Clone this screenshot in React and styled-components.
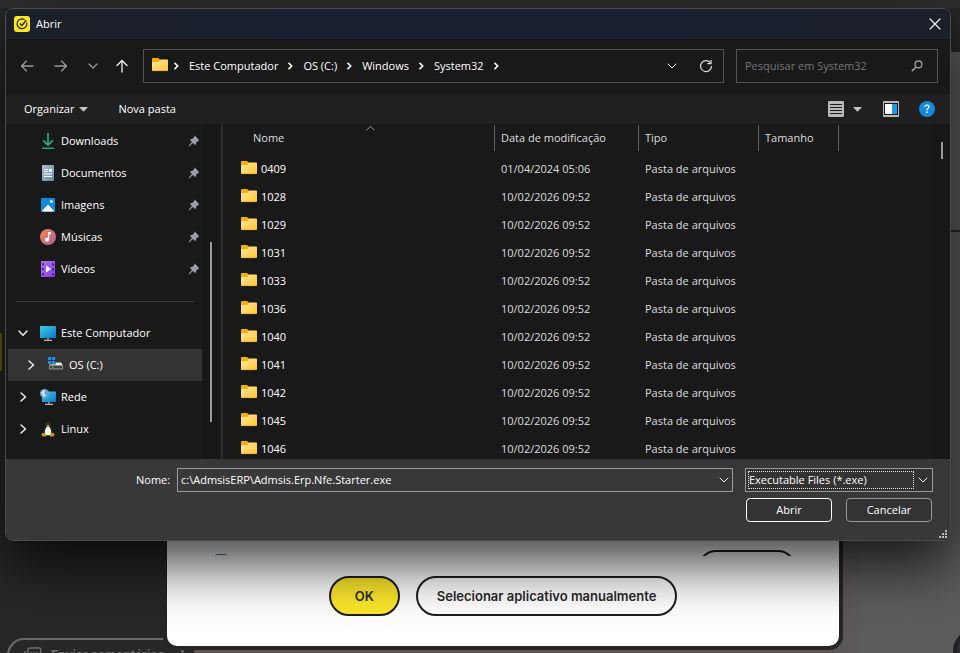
import React from "react";
import styled, { createGlobalStyle } from "styled-components";

const GlobalStyle = createGlobalStyle`
  *, *::before, *::after { box-sizing: border-box; }
  html, body { margin: 0; height: 100%; overflow: hidden; background: #262626; }
  body { font-family: "Open Sans", "Noto Sans", sans-serif; font-size: 11px; line-height: 16px; color: #fff; }
  button, input, select { font: inherit; color: inherit; margin: 0; }
`;

/* ---------- page behind the dialogs ---------- */

const Stage = styled.div`
  position: relative;
  min-height: 100vh;
  overflow: hidden;
  display: grid;
`;

const AppPage = styled.div`
  display: grid;
  grid-template-columns: 194px 1fr;
  grid-template-rows: 52px 1fr;
`;

const AppBar = styled.header`
  grid-column: 1 / -1;
  background: linear-gradient(#2e2e2e 8px, #262626 8px);
`;

const AppSide = styled.aside`
  display: flex;
  flex-direction: column;
  justify-content: space-between;
  background: #272727;
`;

const ActiveMark = styled.div`
  width: 2px;
  height: 38px;
  margin-top: 281px;
  border-radius: 0 2px 2px 0;
  background: #6b6214;
`;

const FeedbackButton = styled.button`
  display: flex;
  align-items: center;
  gap: 9px;
  height: 34px;
  margin: 0 10px -19px 7px;
  padding: 0 0 0 15px;
  border: 2px solid #6a6a6a;
  border-radius: 17px;
  background: none;
  color: #6e6e6e;
  font-family: Inter, sans-serif;
  font-size: 12px;
  font-weight: 700;
  white-space: nowrap;
`;

const AppMain = styled.main`
  display: flex;
  flex-direction: column;
  align-items: flex-end;
  justify-content: space-between;
  background: linear-gradient(90deg, #5c5553 640px, #5c5c5c 670px);
`;

const MainRule = styled.hr`
  width: 100%;
  margin: 178px 0 0;
  border: 0;
  border-top: 2px solid #262626;
`;

const MainText = styled.p`
  margin: 84px 55px 0 0;
  color: #262626;
  font-family: Inter, sans-serif;
  font-size: 13px;
`;

const ChatBubble = styled.button`
  width: 44px;
  height: 44px;
  margin: 0 -37px -20px 0;
  border: 4px solid #202020;
  border-radius: 50%;
  background: #2a2d31;
`;

/* ---------- application prompt ---------- */

const Prompt = styled.section`
  position: absolute;
  left: 163px;
  right: 117px;
  bottom: 3px;
  display: flex;
  flex-direction: column;
  padding-top: 120px;
  border: 4px solid #262626;
  border-radius: 14px;
  background: #fff;
`;

const PromptScroll = styled.div`
  display: flex;
  align-items: flex-start;
  justify-content: space-between;
  height: 6px;
  overflow: hidden;
  padding: 0 43px 0 48px;
`;

const PromptIcon = styled.div`
  width: 12px;
  height: 12px;
  margin-top: 4px;
  border-top: 1px solid #1d6fa5;
  border-radius: 3px;
`;

const PromptPill = styled.div`
  width: 98px;
  height: 36px;
  border: 2px solid #202020;
  border-radius: 18px;
`;

const PromptActions = styled.div`
  display: flex;
  justify-content: center;
  gap: 16px;
  padding: 20px 0 30px;
`;

const PillButton = styled.button`
  height: 40px;
  padding: 0 ${(p) => (p.$primary ? 24 : 19)}px;
  border: 2px solid #1d1d1d;
  border-radius: 20px;
  background: ${(p) => (p.$primary ? "#fde92b" : "#fff")};
  color: #2a2a2a;
  font-family: Inter, sans-serif;
  font-size: 13px;
  font-weight: 600;
  white-space: nowrap;
`;

/* ---------- file dialog ---------- */

const Dialog = styled.section`
  position: absolute;
  top: 8px;
  left: 5px;
  right: 9px;
  display: flex;
  flex-direction: column;
  overflow: hidden;
  border: 1px solid #4a4a4a;
  border-radius: 8px;
  background: #191919;
  box-shadow: 0 23px 56px rgba(0, 0, 0, 0.76);
`;

const TitleBar = styled.header`
  display: flex;
  align-items: center;
  gap: 6px;
  height: 30px;
  padding: 0 7px 0 8px;
  background: linear-gradient(90deg, #1c2027, #1a2030 30%, #1a2030 70%, #1c2029);
`;

const DialogTitle = styled.h1`
  flex: 1;
  margin: 0;
  font-size: 11px;
  font-weight: 400;
  line-height: 16px;
`;

const IconButton = styled.button`
  display: flex;
  align-items: center;
  justify-content: center;
  flex: none;
  width: ${(p) => p.$w || 16}px;
  height: 16px;
  padding: 0;
  border: 0;
  background: none;
  color: ${(p) => (p.$dim ? "#9a9a9a" : "#f2f2f2")};
`;

const NavBar = styled.nav`
  display: flex;
  align-items: center;
  gap: 12px;
  height: 55px;
  padding: 0 12px 1px;
`;

const NavButtons = styled.div`
  display: flex;
  gap: 16px;
  width: 113px;
`;

const AddressBar = styled.div`
  display: flex;
  align-items: center;
  flex: 1;
  height: 34px;
  padding: 0 9px 0 8px;
  border: 1px solid #535353;
`;

const Crumbs = styled.ol`
  display: flex;
  align-items: center;
  flex: 1;
  margin: 0;
  padding: 0 0 0 6px;
  list-style: none;
`;

const Crumb = styled.li`
  display: flex;
  align-items: center;
`;

const CrumbLink = styled.a`
  margin: 0 10px;
  color: #fff;
  text-decoration: none;
  white-space: nowrap;
`;

const AddressTools = styled.div`
  display: flex;
  gap: 18px;
`;

const SearchBox = styled.label`
  display: flex;
  align-items: center;
  width: 202px;
  height: 34px;
  padding: 0 14px 0 8px;
  border: 1px solid #535353;
`;

const SearchInput = styled.input`
  flex: 1;
  min-width: 0;
  padding: 0;
  border: 0;
  outline: 0;
  background: none;
  &::placeholder { color: #777; opacity: 1; }
`;

const ToolBar = styled.div`
  display: flex;
  align-items: center;
  justify-content: space-between;
  height: 30px;
  padding: 0 15px 0 18px;
  background: #202020;
`;

const ToolGroup = styled.div`
  display: flex;
  align-items: center;
  gap: ${(p) => p.$gap}px;
`;

const ToolButton = styled.button`
  display: flex;
  align-items: center;
  gap: 5px;
  padding: 0;
  border: 0;
  background: none;
  white-space: nowrap;
`;

const Browser = styled.div`
  display: flex;
  height: 335px;
  overflow: hidden;
`;

const SidePane = styled.div`
  display: flex;
  width: 217px;
  flex: none;
  padding-left: 2px;
  border-right: 2px solid #2b2b2b;
`;

const Tree = styled.ul`
  width: 194px;
  margin: 0;
  padding: 1px 0 0;
  list-style: none;
`;

const TreeGap = styled.li`
  display: flex;
  align-items: center;
  height: 32px;
  padding: 0 8px;
  &::after { content: ""; flex: 1; border-top: 1px solid #3c3c3c; }
`;

const TreeItem = styled.li`
  display: flex;
  align-items: center;
  height: 32px;
  padding: 0 2px 0 ${(p) => (p.$nested ? 16 : 8)}px;
  background: ${(p) => (p.$selected ? "#333" : "none")};
`;

const TreeToggle = styled.span`
  display: flex;
  width: 24px;
  color: #e8e8e8;
`;

const TreeLabel = styled.span`
  flex: 1;
  padding-left: 5px;
  white-space: nowrap;
`;

const ScrollTrack = styled.div`
  flex: none;
  width: 17px;
  background: #171717;
`;

const ScrollThumb = styled.div`
  width: 2px;
  height: ${(p) => p.$size}px;
  margin: ${(p) => p.$offset}px 0 0 8px;
  background: #9a9a9a;
`;

const FilePane = styled.div`
  position: relative;
  flex: 1;
  overflow: hidden;
`;

const SortMark = styled.span`
  position: absolute;
  top: 1px;
  left: 143px;
  display: flex;
  color: #9c9c9c;
`;

const FileTable = styled.table`
  width: 100%;
  table-layout: fixed;
  border-collapse: collapse;
`;

const Col = styled.col`
  width: ${(p) => (p.$w ? `${p.$w}px` : "auto")};
`;

const HeadCell = styled.th`
  height: 31px;
  padding: 1px 0 4px;
  font-weight: 400;
  text-align: left;
  color: #dedede;
`;

const HeadLabel = styled.div`
  height: 26px;
  padding: 5px 0 0 ${(p) => p.$pad}px;
  border-right: 1px solid #5f5f5f;
`;

const Cell = styled.td`
  height: 28px;
  padding: 0 0 0 6px;
  color: #dedede;
  white-space: nowrap;
`;

const NameCell = styled(Cell)`
  padding-left: 18px;
  color: #fff;
`;

const FileName = styled.div`
  display: flex;
  align-items: center;
  gap: 4px;
`;

const Footer = styled.form`
  display: flex;
  flex-direction: column;
  gap: 6px;
  padding: 9px 17px 18px 130px;
  background: #383838;
`;

const FieldRow = styled.div`
  display: flex;
  align-items: center;
`;

const FieldLabel = styled.label`
  width: 41px;
  flex: none;
`;

const ComboBox = styled.div`
  display: flex;
  align-items: center;
  flex: 1;
  height: 24px;
  margin-right: 12px;
  padding: 0 0 0 3px;
  border: 1px solid #9b9b9b;
`;

const ComboInput = styled.input`
  flex: 1;
  min-width: 0;
  padding: 0;
  border: 0;
  outline: 0;
  background: none;
`;

const TypeBox = styled.div`
  display: flex;
  align-items: center;
  width: 188px;
  height: 24px;
  padding: 2px 0 2px 2px;
  border: 1px solid #9b9b9b;
  background: #333;
`;

const TypeSelect = styled.select`
  flex: 1;
  min-width: 0;
  height: 18px;
  padding: 0;
  appearance: none;
  border: 1px dotted #e6e6e6;
  border-radius: 0;
  outline: 0;
  background: none;
  line-height: 16px;
`;

const ActionRow = styled.div`
  display: flex;
  justify-content: flex-end;
  gap: 14px;
  padding-right: 1px;
`;

const ActionButton = styled.button`
  width: 86px;
  height: 24px;
  padding: 0;
  border: 1px solid ${(p) => (p.$default ? "#fff" : "#9b9b9b")};
  border-radius: 4px;
  background: #333;
`;

const Grip = styled.span`
  position: absolute;
  right: 3px;
  bottom: 2px;
  display: flex;
`;

/* ---------- icons ---------- */

const Line = ({ w, h, d, sw = 1 }) => (
  <svg width={w} height={h} viewBox={`0 0 ${w} ${h}`} fill="none" stroke="currentColor" strokeWidth={sw} strokeLinecap="round" strokeLinejoin="round">
    <path d={d} />
  </svg>
);

const NortonIcon = () => (
  <svg width="16" height="16" viewBox="0 0 16 16">
    <rect width="16" height="16" rx="3" fill="#fde72b" />
    <path d="M10.6 3.7A4.9 4.9 0 1 0 12.7 6.6" fill="none" stroke="#23231c" strokeWidth="1.2" />
    <path d="M5.8 7.4 7.9 9.4 12.3 4.3" fill="none" stroke="#23231c" strokeWidth="1.4" />
  </svg>
);

const FolderIcon = () => (
  <svg width="16" height="16" viewBox="0 0 16 16">
    <defs>
      <linearGradient id="folder" x1="0" y1="0" x2="1" y2="1">
        <stop offset="0" stopColor="#ffe8a0" />
        <stop offset="1" stopColor="#fdc634" />
      </linearGradient>
    </defs>
    <path d="M0 1Q0 0 1 0H6L8 1.5V5H0Z" fill="#f5ad0c" />
    <path d="M0 4.8Q0 4 .8 4H6.4L8.4 1.5H15.2Q16 1.5 16 2.3V12Q16 13 15.2 13H.8Q0 13 0 12Z" fill="url(#folder)" />
    <path d="M.5 12.7H15.5" stroke="#e2a41c" strokeWidth=".6" />
  </svg>
);

const DownloadIcon = () => (
  <svg width="16" height="16" viewBox="0 0 16 16" fill="none" stroke="#25b58f" strokeWidth="1.6">
    <path d="M8 0V12M3.2 7.4 8 12.2 12.8 7.4" />
    <path d="M2 15.2H14" stroke="#1ea588" />
  </svg>
);

const DocumentIcon = () => (
  <svg width="16" height="16" viewBox="0 0 16 16">
    <defs>
      <linearGradient id="doc" x1="0" y1="0" x2="1" y2="1">
        <stop offset="0" stopColor="#a9c0d6" />
        <stop offset="1" stopColor="#6685a8" />
      </linearGradient>
    </defs>
    <rect x="2" width="12" height="16" rx="1" fill="url(#doc)" />
    <path d="M4 4.5H8M4 6.5H8M4 9H12M4 11.5H12" stroke="#fff" strokeWidth="1.1" />
    <rect x="9" y="4" width="3" height="3" fill="#fff" />
  </svg>
);

const ImageIcon = () => (
  <svg width="16" height="16" viewBox="0 0 16 16">
    <rect x="1" y="1" width="14" height="14" rx="1" fill="#1489d8" />
    <path d="M2 14 8 7.4 14 14Q13.5 14.4 13 14.4H3Q2.4 14.4 2 14Z" fill="#fff" />
    <circle cx="11.4" cy="4.6" r="1.5" fill="#d7f0ff" />
  </svg>
);

const MusicIcon = () => (
  <svg width="16" height="16" viewBox="0 0 16 16">
    <defs>
      <linearGradient id="music" x1="0" y1="0" x2="1" y2="1">
        <stop offset="0" stopColor="#f2894c" />
        <stop offset="1" stopColor="#b45a9b" />
      </linearGradient>
    </defs>
    <circle cx="8" cy="8" r="8" fill="url(#music)" />
    <path d="M8 3H11V5.2H9.2V10.6A2.1 2.1 0 1 1 8 8.8Z" fill="#fff" />
  </svg>
);

const VideoIcon = () => (
  <svg width="16" height="16" viewBox="0 0 16 16">
    <defs>
      <linearGradient id="video" x1="0" y1="0" x2="1" y2="1">
        <stop offset="0" stopColor="#b070f2" />
        <stop offset="1" stopColor="#7c3fe0" />
      </linearGradient>
    </defs>
    <rect x="1" width="14" height="16" rx="1" fill="url(#video)" />
    <path d="M3 2.2V14M13 2.2V14" stroke="#43208c" strokeWidth="1.8" strokeDasharray="2 3" />
    <path d="M6 4.4 11.2 8 6 11.6Z" fill="#fff" />
  </svg>
);

const PinIcon = () => (
  <svg width="12" height="12" viewBox="0 0 12 12" fill="#9aa3ac">
    <path d="M6.7.6 11.3 5.2 10.1 5.7 8 7.9 7.6 10.4 5 7.9 1.2 11.6 .5 11.3 4 7 1.6 4.4 4.2 4 6.2 1.9Z" />
  </svg>
);

const Screen = ({ x = 0, y = 1 }) => (
  <>
    <defs>
      <linearGradient id="screen" x1="0" y1="0" x2="1" y2="1">
        <stop offset="0" stopColor="#38d0e0" />
        <stop offset="1" stopColor="#1272c8" />
      </linearGradient>
    </defs>
    <rect x={x} y={y} width={16 - x} height={13 - y} rx=".6" fill="url(#screen)" />
    <path d={`M${8 + x / 2} 13V15M${4 + x / 2} 15.3H${12 + x / 2}`} stroke="#a9b8c4" strokeWidth="1.3" />
  </>
);

const ComputerIcon = () => (
  <svg width="16" height="16" viewBox="0 0 16 16"><Screen /></svg>
);

const NetworkIcon = () => (
  <svg width="16" height="16" viewBox="0 0 16 16">
    <Screen x={2} y={2.6} />
    <circle cx="4.5" cy="4.5" r="4.5" fill="#6ba6cc" />
    <path d="M1 3.5Q3 1 5.5 1.4L4 4 6 6.2 3.8 8.2 2.4 5.6Z" fill="#d3e7f2" />
  </svg>
);

const DriveIcon = () => (
  <svg width="16" height="16" viewBox="0 0 16 16">
    <path d="M3 5.5H13L15 8.5H1Z" fill="#e9e9e9" />
    <rect x="1" y="8" width="14" height="4.5" rx=".6" fill="#8e8e8e" />
    <rect x="2" y="9" width="12" height="2.3" fill="#3f3f3f" />
    <rect x="4" y="9.4" width="1.4" height="1.4" fill="#46e03c" />
    <rect x="0" y="0" width="7.6" height="7.4" fill="#333" />
    <path d="M0 0H3.2V3H0ZM4 0H7.2V3H4ZM0 4H3.2V7H0ZM4 4H7.2V7H4Z" fill="#1a90e8" />
  </svg>
);

const LinuxIcon = () => (
  <svg width="16" height="16" viewBox="0 0 16 16">
    <path d="M5.6 3Q5.6.2 8 .2T10.4 3Q10.4 5.4 12 8 13.6 10.6 12.2 13.6H3.8Q2.4 10.6 4 8 5.6 5.4 5.6 3Z" fill="#2c2c2c" />
    <path d="M8 5.2Q10 5.6 10.8 8.8 11.6 12 10.4 14.2H5.6Q4.4 12 5.2 8.8 6 5.6 8 5.2Z" fill="#fff" />
    <path d="M6.4 4H9.6L8 5.8Z" fill="#e8a90c" />
    <path d="M2 12.2 4.4 11.8 6.4 14.6 5 15.8 1.4 14.8ZM14 12.2 11.6 11.8 9.6 14.6 11 15.8 14.6 14.8Z" fill="#d79a0c" />
  </svg>
);

const ChevronRight = () => <Line w={14} h={12} sw={1.6} d="M5 2 9.5 6 5 10" />;
const ChevronDown = () => <Line w={14} h={12} sw={1.6} d="M3 4 7 8.2 11 4" />;
const CrumbChevron = () => <Line w={5} h={8} sw={1.6} d="M1 1.4 3.8 4 1 6.6" />;
const SmallDown = () => <Line w={10} h={10} d="M1 3 5 7 9 3" />;
const Caret = () => (
  <svg width="9" height="5" viewBox="0 0 9 5"><path d="M0 0H9L4.5 4.8Z" fill="#c4c4c4" /></svg>
);

const ListViewIcon = () => (
  <svg width="16" height="16" viewBox="0 0 16 16">
    <rect width="16" height="16" rx="1" fill="#b9b9b9" />
    <path d="M2 3.5H14M2 6.5H14M2 9.5H14M2 12.5H14" stroke="#1c1c1c" />
  </svg>
);

const PreviewIcon = () => (
  <svg width="16" height="16" viewBox="0 0 16 16">
    <rect width="16" height="16" rx="1" fill="#b9b9b9" />
    <rect x="1" y="2" width="14" height="12" fill="#161616" />
    <rect x="2" y="3" width="7" height="10" fill="#fff" />
    <rect x="9" y="3" width="5" height="10" fill="#1e97e6" />
  </svg>
);

const HelpIcon = () => (
  <svg width="16" height="16" viewBox="0 0 16 16">
    <circle cx="8" cy="8" r="8" fill="#1488dc" />
    <path d="M6.1 5.9Q6.1 4.1 8 4.1T9.9 5.8Q9.9 6.9 8.9 7.5 8 8 8 9.3" fill="none" stroke="#fff" strokeWidth="1.4" />
    <rect x="7.2" y="10.4" width="1.6" height="1.6" fill="#fff" />
  </svg>
);

const SearchIcon = () => (
  <svg width="12" height="12" viewBox="0 0 12 12" fill="none" stroke="#9c9c9c">
    <circle cx="7.5" cy="4.4" r="3.4" strokeWidth="1.4" />
    <path d="M5 7 .9 11.1" strokeWidth="1.7" />
  </svg>
);

const RefreshIcon = () => (
  <svg width="14" height="14" viewBox="0 0 14 14" fill="none" stroke="#dcdcdc" strokeWidth="1.2">
    <path d="M11.7 4.2A5.5 5.5 0 1 0 12.5 7" />
    <path d="M12 1V4.6H8.4" />
  </svg>
);

const GripIcon = () => (
  <svg width="8" height="8" viewBox="0 0 8 8" fill="#bdbdbd">
    <path d="M6 0H8V2H6ZM6 3H8V5H6ZM6 6H8V8H6ZM3 3H5V5H3ZM3 6H5V8H3ZM0 6H2V8H0Z" />
  </svg>
);

const FeedbackIcon = () => (
  <svg width="18" height="16" viewBox="0 0 18 16" fill="none" stroke="#6e6e6e" strokeWidth="1.5">
    <rect x="3.8" y="1" width="13" height="10" rx="2" />
    <path d="M1 4V13.5H13M7 5V7M10 5V7M13 5V7" />
  </svg>
);

/* ---------- data ---------- */

const pinned = [
  ["Downloads", DownloadIcon],
  ["Documentos", DocumentIcon],
  ["Imagens", ImageIcon],
  ["Músicas", MusicIcon],
  ["Vídeos", VideoIcon],
];

const places = [
  { name: "Este Computador", Icon: ComputerIcon, open: true },
  { name: "OS (C:)", Icon: DriveIcon, nested: true },
  { name: "Rede", Icon: NetworkIcon },
  { name: "Linux", Icon: LinuxIcon },
];

const crumbs = ["Este Computador", "OS (C:)", "Windows", "System32"];

const folders = ["0409", "1028", "1029", "1031", "1033", "1036", "1040", "1041", "1042", "1045", "1046"].map(
  (name, i) => ({ name, date: i === 0 ? "01/04/2024 05:06" : "10/02/2026 09:52" })
);

const columns = [
  { label: "Nome", width: 272, pad: 30 },
  { label: "Data de modificação", width: 144, pad: 6 },
  { label: "Tipo", width: 120, pad: 6 },
  { label: "Tamanho", width: 80, pad: 6 },
];

export default function App() {
  return (
    <>
      <GlobalStyle />
      <Stage>
        <AppPage>
          <AppBar />
          <AppSide>
            <ActiveMark />
            <FeedbackButton><FeedbackIcon />Enviar comentários</FeedbackButton>
          </AppSide>
          <AppMain>
            <MainRule />
            <MainText>terminados</MainText>
            <ChatBubble aria-label="Chat" />
          </AppMain>
        </AppPage>

        <Prompt>
          <PromptScroll><PromptIcon /><PromptPill /></PromptScroll>
          <PromptActions>
            <PillButton $primary>OK</PillButton>
            <PillButton>Selecionar aplicativo manualmente</PillButton>
          </PromptActions>
        </Prompt>

        <Dialog role="dialog" aria-labelledby="dialog-title">
          <TitleBar>
            <NortonIcon />
            <DialogTitle id="dialog-title">Abrir</DialogTitle>
            <IconButton aria-label="Fechar"><Line w={12} h={12} sw={1.2} d="M1 1 11 11M11 1 1 11" /></IconButton>
          </TitleBar>

          <NavBar>
            <NavButtons>
              <IconButton $dim $w={18} aria-label="Voltar"><Line w={14} h={14} sw={1.3} d="M13 7H1.5M6.5 2 1.5 7 6.5 12" /></IconButton>
              <IconButton $dim $w={18} aria-label="Avançar"><Line w={14} h={14} sw={1.3} d="M1 7H12.5M7.5 2 12.5 7 7.5 12" /></IconButton>
              <IconButton $dim $w={14} aria-label="Locais recentes"><Line w={10} h={10} sw={1.3} d="M1 3 5 7 9 3" /></IconButton>
              <IconButton $w={12} aria-label="Acima"><Line w={12} h={14} sw={1.3} d="M6 13V1.5M1 6.5 6 1.5 11 6.5" /></IconButton>
            </NavButtons>
            <AddressBar>
              <FolderIcon />
              <Crumbs>
                <CrumbChevron />
                {crumbs.map((c) => (
                  <Crumb key={c}><CrumbLink href="#">{c}</CrumbLink><CrumbChevron /></Crumb>
                ))}
              </Crumbs>
              <AddressTools>
                <IconButton aria-label="Histórico"><SmallDown /></IconButton>
                <IconButton aria-label="Atualizar"><RefreshIcon /></IconButton>
              </AddressTools>
            </AddressBar>
            <SearchBox>
              <SearchInput aria-label="Pesquisar" placeholder="Pesquisar em System32" />
              <SearchIcon />
            </SearchBox>
          </NavBar>

          <ToolBar>
            <ToolGroup $gap={30}>
              <ToolButton>Organizar <Caret /></ToolButton>
              <ToolButton>Nova pasta</ToolButton>
            </ToolGroup>
            <ToolGroup $gap={20}>
              <ToolGroup $gap={8}>
                <IconButton aria-label="Modo de exibição"><ListViewIcon /></IconButton>
                <IconButton $w={11} aria-label="Mais opções"><Caret /></IconButton>
              </ToolGroup>
              <IconButton aria-label="Painel de visualização"><PreviewIcon /></IconButton>
              <IconButton aria-label="Ajuda"><HelpIcon /></IconButton>
            </ToolGroup>
          </ToolBar>

          <Browser>
            <SidePane>
              <Tree>
                {pinned.map(([name, Icon]) => (
                  <TreeItem key={name}>
                    <TreeToggle />
                    <Icon />
                    <TreeLabel>{name}</TreeLabel>
                    <PinIcon />
                  </TreeItem>
                ))}
                <TreeGap />
                {places.map(({ name, Icon, open, nested }) => (
                  <TreeItem key={name} $nested={nested} $selected={nested}>
                    <TreeToggle>{open ? <ChevronDown /> : <ChevronRight />}</TreeToggle>
                    <Icon />
                    <TreeLabel>{name}</TreeLabel>
                  </TreeItem>
                ))}
              </Tree>
              <ScrollTrack><ScrollThumb $size={180} $offset={118} /></ScrollTrack>
            </SidePane>

            <FilePane>
              <SortMark><Line w={9} h={6} d="M.8 5 4.5 1.3 8.2 5" /></SortMark>
              <FileTable>
                <colgroup>
                  {columns.map((c) => <Col key={c.label} $w={c.width} />)}
                  <Col />
                </colgroup>
                <thead>
                  <tr>
                    {columns.map((c) => (
                      <HeadCell key={c.label}><HeadLabel $pad={c.pad}>{c.label}</HeadLabel></HeadCell>
                    ))}
                    <HeadCell />
                  </tr>
                </thead>
                <tbody>
                  {folders.map((f) => (
                    <tr key={f.name}>
                      <NameCell><FileName><FolderIcon />{f.name}</FileName></NameCell>
                      <Cell>{f.date}</Cell>
                      <Cell>Pasta de arquivos</Cell>
                      <Cell />
                      <Cell />
                    </tr>
                  ))}
                </tbody>
              </FileTable>
            </FilePane>
            <ScrollTrack><ScrollThumb $size={17} $offset={18} /></ScrollTrack>
          </Browser>

          <Footer onSubmit={(e) => e.preventDefault()}>
            <FieldRow>
              <FieldLabel htmlFor="file-name">Nome:</FieldLabel>
              <ComboBox>
                <ComboInput id="file-name" defaultValue="c:\AdmsisERP\Admsis.Erp.Nfe.Starter.exe" />
                <IconButton type="button" aria-label="Nomes recentes"><SmallDown /></IconButton>
              </ComboBox>
              <TypeBox>
                <TypeSelect aria-label="Tipo de arquivo" defaultValue="exe">
                  <option value="exe">Executable Files (*.exe)</option>
                </TypeSelect>
                <IconButton as="span" $w={18}><SmallDown /></IconButton>
              </TypeBox>
            </FieldRow>
            <ActionRow>
              <ActionButton $default>Abrir</ActionButton>
              <ActionButton type="button">Cancelar</ActionButton>
            </ActionRow>
          </Footer>
          <Grip><GripIcon /></Grip>
        </Dialog>
      </Stage>
    </>
  );
}
